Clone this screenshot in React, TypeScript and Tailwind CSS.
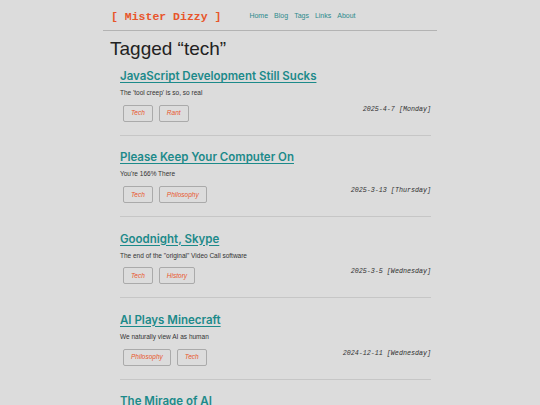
const posts = [
  {
    title: "JavaScript Development Still Sucks",
    desc: "The 'tool creep' is so, so real",
    tags: ["Tech", "Rant"],
    date: "2025-4-7 [Monday]",
  },
  {
    title: "Please Keep Your Computer On",
    desc: "You're 166% There",
    tags: ["Tech", "Philosophy"],
    date: "2025-3-13 [Thursday]",
  },
  {
    title: "Goodnight, Skype",
    desc: "The end of the \"original\" Video Call software",
    tags: ["Tech", "History"],
    date: "2025-3-5 [Wednesday]",
  },
  {
    title: "AI Plays Minecraft",
    desc: "We naturally view AI as human",
    tags: ["Philosophy", "Tech"],
    date: "2024-12-11 [Wednesday]",
  },
  {
    title: "The Mirage of AI",
    desc: "",
    tags: [],
    date: "",
  },
];

export default function App() {
  return (
    <main className="min-h-screen h-[405px] overflow-hidden bg-[#dcdcdc] font-['Liberation_Sans',sans-serif]">
      <div className="mx-auto w-[334px]">
        <header className="flex items-center h-[31px] border-b border-[#b3b3b3] pl-[8px] pt-[3px]">
          <span className="font-['Liberation_Mono',monospace] font-bold text-[11.5px] text-[#e8552b] whitespace-pre">
            [ Mister Dizzy ]
          </span>
          <nav className="flex gap-[6px] ml-[28px] text-[7px] text-[#2c8a8c]">
            <a href="#">Home</a>
            <a href="#">Blog</a>
            <a href="#">Tags</a>
            <a href="#">Links</a>
            <a href="#">About</a>
          </nav>
        </header>

        <h1 className="pl-[7px] pt-[6px] text-[19px] leading-[24px] text-[#222]">Tagged “tech”</h1>

        <div className="pl-[17px] pr-[6px]">
          {posts.map((p) => (
            <article key={p.title} className="pt-[6px]">
              <h2 className="text-[11.5px] leading-[18px] text-[#1c8a8a] underline underline-offset-[2px] font-['Inter',sans-serif] font-semibold">
                {p.title}
              </h2>
              {p.desc && (
                <>
                  <p className="mt-[3px] text-[6.5px] text-[#333]">{p.desc}</p>
                  <div className="flex items-start justify-between mt-[7px]">
                    <div className="flex gap-[6px] pl-[3px]">
                      {p.tags.map((t) => (
                        <span
                          key={t}
                          className="h-[17px] px-[7px] flex items-center border border-[#aaa] rounded-[2px] text-[6.5px] italic text-[#e8552b]"
                        >
                          {t}
                        </span>
                      ))}
                    </div>
                    <span className="-mt-[1px] font-['Liberation_Mono',monospace] italic text-[6.7px] text-[#333] whitespace-pre">
                      {p.date}
                    </span>
                  </div>
                  <div className="mt-[13px] mb-[6.5px] border-b border-[#c6c6c6]" />
                </>
              )}
            </article>
          ))}
        </div>
      </div>
    </main>
  );
}
